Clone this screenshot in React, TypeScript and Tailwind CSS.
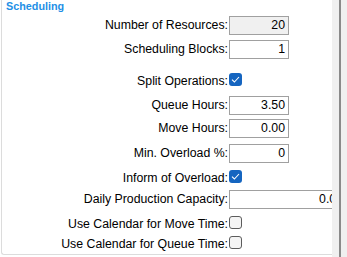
import React from 'react';

type Row =
  | { kind: 'input'; label: string; value: string; mt: string; disabled?: boolean; wide?: boolean }
  | { kind: 'check'; label: string; checked: boolean; mt: string };

const rows: Row[] = [
  { kind: 'input', label: 'Number of Resources:', value: '20', mt: 'mt-[4px]', disabled: true },
  { kind: 'input', label: 'Scheduling Blocks:', value: '1', mt: 'mt-[5px]' },
  { kind: 'check', label: 'Split Operations:', checked: true, mt: 'mt-[13px]' },
  { kind: 'input', label: 'Queue Hours:', value: '3.50', mt: 'mt-[5px]' },
  { kind: 'input', label: 'Move Hours:', value: '0.00', mt: 'mt-[4px]' },
  { kind: 'input', label: 'Min. Overload %:', value: '0', mt: 'mt-[6px]' },
  { kind: 'check', label: 'Inform of Overload:', checked: true, mt: 'mt-[6px]' },
  { kind: 'input', label: 'Daily Production Capacity:', value: '0.00', mt: 'mt-[2px]', wide: true },
  { kind: 'check', label: 'Use Calendar for Move Time:', checked: false, mt: 'mt-[6px]' },
  { kind: 'check', label: 'Use Calendar for Queue Time:', checked: false, mt: 'mt-[1px]' },
];

function CheckBox({ checked }: { checked: boolean }) {
  if (checked) {
    return (
      <span className="mb-[5px] flex h-[13px] w-[13px] shrink-0 items-center justify-center rounded-[3px] bg-[#1565c0]">
        <svg width="9" height="7" viewBox="0 0 9 7" fill="none">
          <path d="M1 3.6 L3.4 6 L8 1" stroke="#ffffff" strokeWidth="1.1" />
        </svg>
      </span>
    );
  }
  return <span className="mb-[5px] block h-[13px] w-[13px] shrink-0 rounded-[3px] border border-[#5c5c5c] bg-[#f4f4f4]" />;
}

export default function App() {
  return (
    <div className="flex h-[257px] w-[347px] overflow-hidden bg-white font-['Liberation_Sans',Arial,sans-serif] text-[12.3px] text-black">
      <div className="w-[332px] shrink-0 pl-[1px]">
        <div className="h-[255px] overflow-hidden rounded-bl-[3px] border-b border-l border-[#dcdcdc]">
          <div className="h-[12px] pl-[4px] text-[10.8px] font-bold leading-[12px] text-[#1e8fe6]">Scheduling</div>
          {rows.map((row) => (
            <div key={row.label} className={`flex h-[19px] items-center ${row.mt}`}>
              <span className="w-[226px] shrink-0 whitespace-nowrap text-right leading-[19px]">{row.label}</span>
              <div className="ml-[1px] flex items-center">
                {row.kind === 'input' ? (
                  <div
                    className={`flex h-[19px] shrink-0 items-center justify-end border border-[#a0a0a0] pr-[3px] leading-none ${
                      row.disabled ? 'bg-[#f0f0f0]' : 'bg-white'
                    } ${row.wide ? 'w-[118px]' : 'w-[60px]'}`}
                  >
                    {row.value}
                  </div>
                ) : (
                  <CheckBox checked={row.checked} />
                )}
              </div>
            </div>
          ))}
        </div>
      </div>
      <div className="h-full w-[15px] shrink-0 bg-[#f0f0f0] pl-[7px]">
        <div className="h-full w-[2px] bg-[#8a8a8a]" />
      </div>
    </div>
  );
}
